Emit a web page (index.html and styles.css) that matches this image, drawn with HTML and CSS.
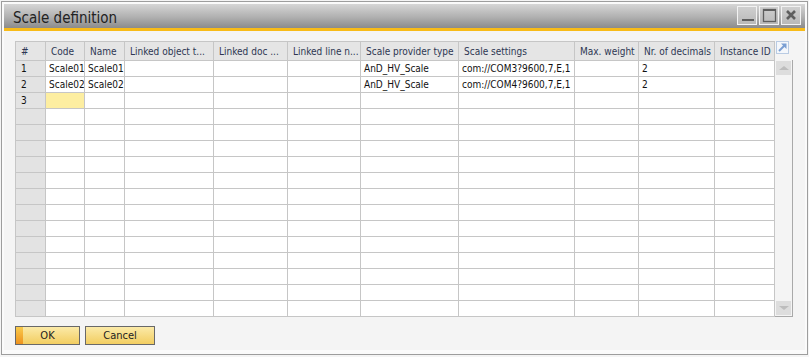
FILE: index.html
```html
<!DOCTYPE html>
<html lang="en">
<head>
  <meta charset="UTF-8" />
  <title>Scale definition</title>
  <link rel="stylesheet" href="styles.css">
</head>
<body>
  <div class="window">
    <div class="titlebar">
      <span class="title">Scale definition</span>
      <div class="win-buttons">
        <div class="win-btn">
          <svg width="18" height="17" viewBox="0 0 18 17"><rect x="4" y="12" width="12" height="2" fill="#5e5e5e"/></svg>
        </div>
        <div class="win-btn">
          <svg width="18" height="17" viewBox="0 0 18 17"><rect x="3.5" y="2.5" width="12" height="12" fill="none" stroke="#5e5e5e" stroke-width="1.3"/><rect x="3" y="2" width="13" height="2" fill="#5e5e5e"/></svg>
        </div>
        <div class="win-btn">
          <svg width="18" height="17" viewBox="0 0 18 17"><path d="M5 4 L13 12 M13 4 L5 12" stroke="#5e5e5e" stroke-width="2.6"/></svg>
        </div>
      </div>
    </div>
    <div class="accent"></div>

    <div class="content">
      <div class="grid-wrap">
        <table class="grid">
          <thead>
            <tr>
              <th class="c-num">#</th>
              <th class="c-code">Code</th>
              <th class="c-name">Name</th>
              <th class="c-obj">Linked object t...</th>
              <th class="c-doc">Linked doc ...</th>
              <th class="c-line">Linked line n...</th>
              <th class="c-prov">Scale provider type</th>
              <th class="c-set">Scale settings</th>
              <th class="c-max">Max. weight</th>
              <th class="c-dec">Nr. of decimals</th>
              <th class="c-inst">Instance ID</th>
            </tr>
          </thead>
          <tbody>
            <tr><td class="num">1</td><td>Scale01</td><td>Scale01</td><td></td><td></td><td></td><td>AnD_HV_Scale</td><td>com://COM3?9600,7,E,1</td><td></td><td>2</td><td></td></tr>
            <tr><td class="num">2</td><td>Scale02</td><td>Scale02</td><td></td><td></td><td></td><td>AnD_HV_Scale</td><td>com://COM4?9600,7,E,1</td><td></td><td>2</td><td></td></tr>
            <tr><td class="num">3</td><td class="active"></td><td></td><td></td><td></td><td></td><td></td><td></td><td></td><td></td><td></td></tr>
            <tr><td class="num"></td><td></td><td></td><td></td><td></td><td></td><td></td><td></td><td></td><td></td><td></td></tr>
            <tr><td class="num"></td><td></td><td></td><td></td><td></td><td></td><td></td><td></td><td></td><td></td><td></td></tr>
            <tr><td class="num"></td><td></td><td></td><td></td><td></td><td></td><td></td><td></td><td></td><td></td><td></td></tr>
            <tr><td class="num"></td><td></td><td></td><td></td><td></td><td></td><td></td><td></td><td></td><td></td><td></td></tr>
            <tr><td class="num"></td><td></td><td></td><td></td><td></td><td></td><td></td><td></td><td></td><td></td><td></td></tr>
            <tr><td class="num"></td><td></td><td></td><td></td><td></td><td></td><td></td><td></td><td></td><td></td><td></td></tr>
            <tr><td class="num"></td><td></td><td></td><td></td><td></td><td></td><td></td><td></td><td></td><td></td><td></td></tr>
            <tr><td class="num"></td><td></td><td></td><td></td><td></td><td></td><td></td><td></td><td></td><td></td><td></td></tr>
            <tr><td class="num"></td><td></td><td></td><td></td><td></td><td></td><td></td><td></td><td></td><td></td><td></td></tr>
            <tr><td class="num"></td><td></td><td></td><td></td><td></td><td></td><td></td><td></td><td></td><td></td><td></td></tr>
            <tr><td class="num"></td><td></td><td></td><td></td><td></td><td></td><td></td><td></td><td></td><td></td><td></td></tr>
            <tr><td class="num"></td><td></td><td></td><td></td><td></td><td></td><td></td><td></td><td></td><td></td><td></td></tr>
            <tr><td class="num"></td><td></td><td></td><td></td><td></td><td></td><td></td><td></td><td></td><td></td><td></td></tr>
          </tbody>
        </table>

        <div class="side">
          <div class="expand">
            <svg width="13" height="13" viewBox="0 0 13 13">
              <rect x="0.5" y="0.5" width="12" height="12" fill="#f4f7fb" stroke="#b9cbe3"/>
              <path d="M3 10 L9 4" stroke="#7a9fd3" stroke-width="2"/>
              <path d="M5 2.5 H10.5 V8 Z" fill="#7a9fd3"/>
            </svg>
          </div>
          <div class="scrollbar">
            <div class="sb-btn"><span class="tri-up"></span></div>
            <div class="sb-btn"><span class="tri-down"></span></div>
          </div>
        </div>
      </div>

      <div class="actions">
        <button class="btn btn-ok">OK</button>
        <button class="btn">Cancel</button>
      </div>
    </div>
  </div>
</body>
</html>
```

FILE: styles.css
```css
* {
  box-sizing: border-box;
}
body {
  margin: 0;
  background: #f4f4f4;
  font-family: "DejaVu Sans Condensed", "DejaVu Sans", sans-serif;
  font-stretch: condensed;
  font-size: 10px;
  color: #111;
}
.window {
  margin: 1px 0 0 1px;
  width: 807px;
  height: 354px;
  border: 1px solid #9d9d9d;
  padding: 2px;
  background: #fafafa;
  display: flex;
  flex-direction: column;
}
.titlebar {
  height: 24px;
  flex: none;
  background: linear-gradient(#d6d6d6, #b0b0b0 55%, #8b8b8b);
  display: flex;
  align-items: center;
  justify-content: space-between;
  padding: 0 4px 0 9px;
}
.title {
  font-size: 15px;
  color: #222;
  padding-top: 3px;
}
.win-buttons {
  display: flex;
  gap: 2px;
  align-self: flex-start;
  margin-top: 2px;
}
.win-btn {
  width: 20px;
  height: 19px;
  border: 1px solid #f2f2f2;
  background: linear-gradient(#cfcfcf, #b9b9b9);
  display: flex;
  align-items: center;
  justify-content: center;
}
.accent {
  height: 3px;
  flex: none;
  background: #f8bb18;
}
.content {
  flex: 1;
  background: #f4f4f4;
  padding: 10px 0 0 11px;
  border-bottom: 2px solid #fbfbfb;
}
.grid-wrap {
  display: flex;
  align-items: flex-start;
}
.grid {
  width: 760px;
  table-layout: fixed;
  border-collapse: separate;
  border-spacing: 0;
  border-top: 1px solid #c6c6c6;
  border-left: 1px solid #c6c6c6;
  background: #fff;
}
.grid th, .grid td {
  border-right: 1px solid #c6c6c6;
  border-bottom: 1px solid #c6c6c6;
  white-space: nowrap;
  overflow: hidden;
  text-align: left;
  font-weight: normal;
  padding: 0 0 0 3px;
}
.grid th {
  height: 19px;
  background: #e5e5e5;
  color: #2d3753;
  padding-left: 5px;
}
.grid td {
  height: 16px;
  line-height: 14px;
}
.grid td.num {
  background: #e3e3e3;
  padding-left: 5px;
}
.grid td.active {
  background: #fdeea1;
}
.c-num { width: 30px; }
.c-code { width: 39px; }
.c-name { width: 40px; }
.c-obj { width: 89px; }
.c-doc { width: 74px; }
.c-line { width: 73px; }
.c-prov { width: 98px; }
.c-set { width: 116px; }
.c-max { width: 64px; }
.c-dec { width: 76px; }
.c-inst { width: 60px; }
.side {
  width: 18px;
  display: flex;
  flex-direction: column;
}
.expand {
  height: 19px;
  padding-left: 1px;
}
.expand svg {
  display: block;
}
.scrollbar {
  height: 257px;
  border-right: 1px solid #a9a9a9;
  border-bottom: 1px solid #a9a9a9;
  padding: 1px;
  display: flex;
  flex-direction: column;
  justify-content: space-between;
}
.sb-btn {
  width: 15px;
  height: 14px;
  background: #dddddd;
  display: flex;
  align-items: center;
  justify-content: center;
}
.tri-up {
  border-left: 5px solid transparent;
  border-right: 5px solid transparent;
  border-bottom: 4px solid #bdbdbd;
}
.tri-down {
  border-left: 5px solid transparent;
  border-right: 5px solid transparent;
  border-top: 4px solid #bdbdbd;
}
.actions {
  display: flex;
  gap: 5px;
  margin-top: 9px;
}
.btn {
  height: 19px;
  border: 1px solid #686868;
  background: linear-gradient(#fbeaa8, #f2cd60);
  font-family: inherit;
  font-stretch: condensed;
  font-size: 11px;
  color: #222;
  padding: 0;
  width: 70px;
}
.btn-ok {
  width: 65px;
  background: linear-gradient(#f9cb4c, #ee921e) left / 7px 100% no-repeat,
    linear-gradient(#fbeaa8, #f2cd60);
}
```
